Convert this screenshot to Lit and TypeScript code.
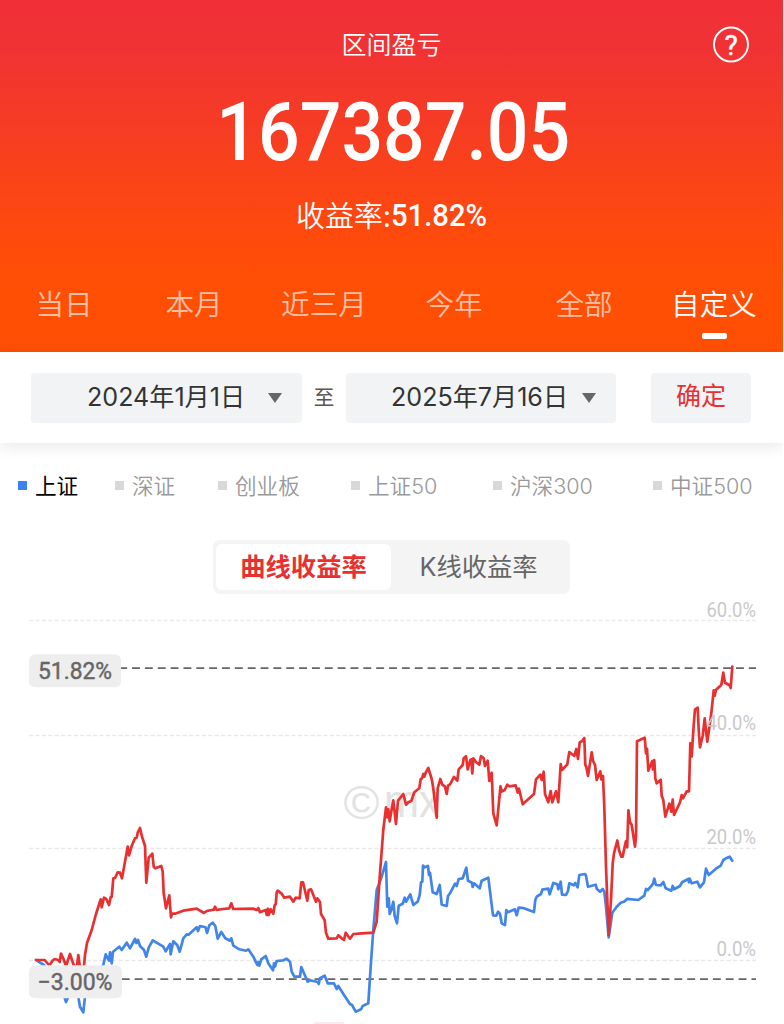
import { LitElement, html, svg, css } from "lit";
import { customElement, property } from "lit/decorators.js";

const PORTFOLIO =
  "36,960 44.7,960 49.3,965.5 52.7,960.5 54.7,959 58.3,960 59.7,962 61,953.5 63.5,959 66,966 70,954 74,966 77,966 78.3,955 80,968 84,966 85,955 87,943 91.7,930 96,914 100.7,899.3 101.7,907.3 104,897.7 106.3,899 109,905 110.7,897 111.7,897 113.3,878.3 115,878 117.7,872.3 120,872.7 122,878.3 127.7,846.7 129,855.3 131.7,846 135,838.3 136.7,837.5 137.7,832.7 140,828 142.3,837.7 145,846 146.3,882.7 148.7,857.7 152.3,853.7 153.7,866.7 155.3,868.3 161.3,866 162.7,871.7 163.7,893.3 166,908.3 169.3,895.3 171,917.3 172,913.7 175,913.7 183.3,910.7 196.7,908.7 204,913 206.7,911 214,909.7 215,906.7 216.7,910 222.7,909 229.3,908.3 231.3,903.3 233.3,909 253.3,908.7 256.7,910 258.3,908 260,912.2 265.7,910 266.7,915 268,908.7 268.7,915 270.7,909.3 273.3,913.7 274.7,905 275.7,904.3 276.7,892.3 277.7,890.7 281.7,893.7 284.3,897.7 290,896.7 293.3,901.7 295.7,897.7 299.7,898.3 301.3,882.3 303,882.3 307.3,900.7 308.7,890 311,889.3 316,901.7 317.3,898.3 320,902 321,914 324.7,920.3 326,932.7 328.3,938.7 336.7,938.3 338.3,935.3 341.7,938.3 344,940 345.7,932.7 350,938.7 353.3,934 362.3,933.3 373.3,932.7 376.7,921.7 380,873 383.3,830 386,807.3 387.3,817.3 388.3,809.3 389.7,821.3 391.2,812 393.3,800.3 396,824 398,800.7 403.3,794 406,804.7 408.3,802.3 411.3,801 414.3,792.3 419.3,788.3 420.7,779 422,778.5 423.3,774 424.3,776.7 425.7,772.7 428.3,768 431.7,779 433.3,788.3 436.7,817.7 437.7,788.3 440.3,779 442.3,784.7 445,786.7 446.7,794 448,785.7 450,784.3 454,777 457.3,780.7 458.7,769.3 462.7,765 463.7,758.3 466,756.3 467.7,769.3 470.3,760 471.3,759.5 472.3,773.3 473.3,758.3 476,762 479.3,764.7 481,756 483.7,758.3 485,766 487.7,760.7 489.3,781 491.7,772.7 493.3,813.3 496.7,825.3 500.5,786.4 501.8,791.5 504.7,790 507.3,784.7 509.3,786.3 515.7,785.3 517.7,792.7 519,788.7 522.7,804.3 534,794 536,779.3 540.3,774.7 541.7,780 543.7,771.7 545,794 548.3,802.3 550.7,791 552.3,802.3 556,791.3 558.3,802.3 560.7,764 562,770 567.3,764.3 569.3,752 574.3,756 576.3,749 578,759 579.7,742.3 582,741.3 584.3,738 585.3,765 586.3,766.7 588,776 591.7,752.3 593,760.7 595,765 596.7,780 600.3,771.3 601.3,779.3 603,776 604.3,806.7 606,866.7 608.7,935 611,900 612.7,863.3 614,853.3 617.3,840.5 619,850 621.2,856.7 622.7,856.7 624.3,848.3 626,841 627.2,847.3 628.4,810.3 630,822.3 631.7,825 635,846.7 636,836.7 637,741.3 644.7,737.7 646,753.3 647,748.7 648.3,770.7 652.3,761 652.9,769.3 654.3,760 655.3,778.3 656.7,783.3 660.7,779.7 661.7,795.7 663.3,800 665.3,816.7 669.3,803.7 671.3,811.7 672.7,799.7 674,815 680,802.3 681.7,795 683,798.3 686.7,791.3 689,791.3 690.3,743.3 691.7,756.3 693.7,725 695,709.3 697.7,707.7 698.7,730 700,747.3 702.7,736 704.7,718.3 707.3,741.7 711.3,713.3 713.7,690.3 714.7,695.7 716,689.7 721.3,685 723.3,672.7 725,682.7 729.3,685 730.7,688 732.3,666.7";

const INDEX =
  "36,960 40,962.7 44,965 50,975 58,985 64.3,996.7 66,1002 68.3,996.7 73,980 78.3,996.7 80,1006.7 83.3,1012.3 85,996.7 93,980 103.3,965 105.7,954.3 109,960.7 110,952.3 111.7,963.3 113,951.7 119.3,946.7 121.7,950 126.7,942.7 130,948.3 135,939 136.3,943 138,940 140,946 144,950 146.3,956.7 148.7,947.7 152.7,940.3 163.3,946.7 165.7,951.3 170,944 170.7,954.3 173.3,941.3 177.3,945.3 179.7,951.7 183.3,938.3 186.7,934.3 188.5,934.8 196.7,927.3 198,931 200,926 205.5,927.3 207,933 209.3,925.3 212.7,922.7 215.3,926 217.7,938.7 221.3,932 225.3,938.3 230,940.7 231.3,938.3 233.3,945.7 239.3,949.3 246,950.7 248.3,949.3 253.3,956.7 257.3,965 258.3,962 259.3,965.7 261.3,959.3 265.7,956 268.3,963.3 273,970.3 274,963.3 275,966.5 276.7,961 283.3,960.3 286.7,958.7 290,961.7 291.7,971.7 294.3,976.7 300,976.7 301.3,967 304.3,974 307.7,981.7 310,980.3 317.7,982 318.7,984 320,978.3 324.7,975.7 327.7,983.3 334,983.3 336.7,989 338.3,986 344,995 350,1004 352,1005 355.7,1011.7 361,1009.3 362.7,1006 368.3,1003.3 370.7,966.7 373.3,930 376.7,890 381.7,876.7 386,862 387.3,906.7 388.8,898.3 389.7,914 391.3,910 393.3,901.7 394.7,916 397,923.3 398.7,905.7 402.7,903.7 404.7,897.7 406,901.7 410.3,894.3 413.3,905 417.7,901.7 419.7,895 421,882.3 422.3,881.7 423,865.7 424.7,867.3 428,866 429,875 430,872.7 432.7,892.3 436.7,894 439.7,885 441.7,904.7 446.7,906 448,896 450,893.3 455,883.7 456.7,886 458.7,879 462.7,878.3 466.3,867.7 468,880.7 472,882.7 472.7,887 474,883.3 479.7,888.3 481.7,880.7 488.3,877.7 493,915.3 496.3,915.7 498,911.7 500,914 501.7,923.3 505,925.2 506.3,910 507.7,912.3 515,909.3 516.7,915.3 518.7,907.7 523.3,908 534,912 535.3,900 536.7,896.7 541,894 542.3,889.7 548.3,888.7 549.7,894.3 553.3,883 557.3,884.3 558.3,889.3 560.7,881.7 562,894.7 566,895 568,891 569.3,883.3 573.7,885.3 575.3,883 577.7,887.3 579.3,875 585,874 586,875.7 588,886.7 595.7,884.7 596.7,888.7 600,891.7 602.7,889 604.3,891.7 606,906.7 608.7,937.3 612.3,912.7 616.7,906.7 620.7,902.7 624,901.7 627.3,898.9 638.3,900 644.3,895.7 646,889 647.7,890 652.7,884.3 654.3,878.7 656,885 660.7,885.3 663.3,882 665.7,888.3 671.3,890.7 672.7,886 674,889.3 680,886 682,882.3 688.3,879 689,882.3 689.7,878.7 691.7,883.3 697.3,881.7 700,887.3 704,882.3 706,868.7 708.7,875 716,868.7 720.7,865.7 723.3,860 726,858.3 729.7,856.7 732.3,860.7";

@customElement("date-field")
class DateField extends LitElement {
  @property() value = "";
  static styles = css`
    :host {
      display: flex;
      align-items: center;
      justify-content: flex-end;
      box-sizing: border-box;
      height: 50px;
      background: #f2f3f5;
      border-radius: 4px;
      color: #333;
      font-size: 25.1px;
      white-space: nowrap;
    }
    .arrow {
      border: 7.5px solid transparent;
      border-top: 10px solid #666;
      border-bottom: 0;
    }
    .value {
      line-height: 48px;
      padding-bottom: 2px;
    }
  `;
  render() {
    return html`<span class="value">${this.value}</span><span class="arrow"></span>`;
  }
}

@customElement("return-chart")
class ReturnChart extends LitElement {
  static styles = css`
    :host {
      display: block;
      height: 430px;
      margin-top: -6px;
    }
    svg {
      display: block;
      overflow: visible;
    }
    .grid {
      stroke: #e9e9e9;
      stroke-width: 1.4;
      stroke-dasharray: 4 2.4;
    }
    .marker {
      stroke: #666;
      stroke-width: 1.9;
      stroke-dasharray: 7.9 4.95;
    }
    .series {
      fill: none;
      stroke-width: 2.7;
      stroke-linejoin: round;
      stroke-linecap: round;
    }
    .mine {
      stroke: #e83030;
    }
    .index {
      stroke: #4285e8;
    }
    .tick {
      font: 400 19.3px Roboto, sans-serif;
      fill: #c9c9c9;
    }
    .pill {
      fill: #eee;
    }
    .bound {
      font: 400 23.6px Roboto, sans-serif;
      fill: #666;
      stroke: #666;
      stroke-width: 0.45;
    }
    .mark {
      font: 46px "Liberation Sans", sans-serif;
      fill: #e2e2e2;
    }
    .stub {
      fill: #fde9eb;
    }
  `;
  render() {
    const ticks = [
      { label: "60.0%", y: 620.5, base: 616.8, x: 706.5 },
      { label: "40.0%", y: 735.5, base: 730.3, x: 706.5 },
      { label: "20.0%", y: 848.5, base: 843.8, x: 706.5 },
      { label: "0.0%", y: 960.5, base: 955.5, x: 716.5 },
    ];
    return html`
      <svg width="783" height="430" viewBox="0 594 783 430">
        ${ticks.map((t) => svg`<line class="grid" x1="29" x2="756" y1=${t.y} y2=${t.y}></line>`)}
        <text class="mark" x="343.5" y="819" textLength="36" lengthAdjust="spacingAndGlyphs">©</text>
        <text class="mark" x="384" y="817" textLength="56" lengthAdjust="spacingAndGlyphs">mx</text>
        <line class="marker" x1="119.2" x2="756" y1="668.1" y2="668.1"></line>
        <line class="marker" x1="121.8" x2="756" y1="979.1" y2="979.1"></line>
        <polyline class="series index" points=${INDEX}></polyline>
        <polyline class="series mine" points=${PORTFOLIO}></polyline>
        ${ticks.map(
          (t) => svg`<text class="tick" x=${t.x} y=${t.base} textLength=${756 - t.x} lengthAdjust="spacingAndGlyphs">${t.label}</text>`
        )}
        <rect class="pill" x="29" y="654.3" width="92" height="33" rx="6"></rect>
        <text class="bound" x="38" y="679" textLength="74" lengthAdjust="spacingAndGlyphs">51.82%</text>
        <rect class="pill" x="29" y="965.3" width="93" height="33" rx="6"></rect>
        <text class="bound" x="37.5" y="990" textLength="75" lengthAdjust="spacingAndGlyphs">−3.00%</text>
        <rect class="stub" x="313" y="1022" width="32" height="6" rx="3"></rect>
      </svg>
    `;
  }
}

@customElement("app-root")
class AppRoot extends LitElement {
  static styles = css`
    :host {
      display: block;
      width: 783px;
      height: 1024px;
      overflow: hidden;
      background: #fff;
      font-family: Inter, "Noto Sans CJK SC", sans-serif;
    }
    .hero {
      display: flex;
      flex-direction: column;
      height: 352px;
      color: #fff;
      background: linear-gradient(#f03037 0, #f13234 50px, #ff4c09 250px, #ff4f05 290px);
    }
    .top {
      display: grid;
      grid-template-columns: 72px 1fr 72px;
      align-items: center;
      height: 88px;
      text-align: center;
    }
    .title {
      grid-column: 2;
      font-size: 25px;
      font-weight: 350;
      padding-bottom: 3px;
    }
    .help {
      display: block;
      justify-self: start;
    }
    .help text {
      font: 400 28px Roboto, sans-serif;
      fill: #fff;
      stroke: #fff;
      stroke-width: 0.5;
    }
    .amount {
      height: 88px;
      line-height: 89px;
      text-align: center;
      font-family: Roboto, sans-serif;
      font-weight: 500;
      font-size: 81.5px;
      transform: scaleX(0.9);
      padding-left: 4px;
    }
    .rate {
      display: flex;
      justify-content: center;
      align-items: center;
      height: 78px;
      font-size: 29px;
    }
    .rate-label {
      font-weight: 350;
      font-family: "Noto Sans CJK SC", sans-serif;
      padding-bottom: 3px;
    }
    .rate svg {
      display: block;
      overflow: visible;
    }
    .rate-value {
      font: 500 31px Roboto, sans-serif;
      fill: #fff;
    }
    .tabs {
      display: grid;
      grid-template-columns: repeat(6, 130px);
      height: 98px;
      margin-left: -1px;
    }
    .tab {
      display: flex;
      flex-direction: column;
      align-items: center;
      font-size: 28.6px;
      font-weight: 350;
      line-height: 42px;
      padding-top: 30px;
      color: rgba(255, 255, 255, 0.65);
    }
    .tab.on {
      color: #fff;
    }
    .tab.on::after {
      content: "";
      width: 25px;
      height: 6px;
      margin-top: 7px;
      border-radius: 2px;
      background: #fff;
    }
    .filter {
      display: flex;
      align-items: center;
      box-sizing: border-box;
      height: 91px;
      padding-left: 31px;
      box-shadow: 0 4px 14px rgba(0, 0, 0, 0.09);
    }
    .from {
      width: 271px;
      padding-right: 20px;
      gap: 23px;
    }
    .to {
      width: 270px;
      padding-right: 20px;
      gap: 14px;
    }
    .sep {
      width: 44px;
      text-align: center;
      font-size: 20.5px;
      color: #555;
      padding-bottom: 4px;
    }
    .ok {
      width: 100px;
      height: 50px;
      margin-left: 35px;
      line-height: 47px;
      text-align: center;
      font-size: 25px;
      color: #e93030;
      background: #f2f3f5;
      border-radius: 4px;
    }
    .legend {
      display: grid;
      grid-template-columns: 97px 103px 133px 142px 160px auto;
      padding-left: 18px;
      height: 86px;
      align-items: center;
      font-size: 21.6px;
      font-weight: 350;
      color: #999;
      white-space: nowrap;
    }
    .entry {
      display: flex;
      align-items: center;
      gap: 8px;
    }
    .name {
      padding-bottom: 3px;
    }
    .swatch {
      width: 9px;
      height: 9px;
      margin-bottom: 2px;
      background: #d8d8d8;
    }
    .entry.on {
      color: #000;
      font-weight: 400;
    }
    .entry.on .swatch {
      background: #3d7ff5;
    }
    .modes {
      display: flex;
      box-sizing: border-box;
      width: 357px;
      height: 54px;
      margin: 11px 0 6px 213px;
      padding: 4px 3px;
      border-radius: 7px;
      background: #f4f4f4;
      font-size: 25.3px;
      line-height: 45px;
      text-align: center;
      color: #666;
    }
    .mode {
      width: 175px;
      border-radius: 6px;
    }
    .mode.on {
      background: #fff;
      color: #e83030;
      font-weight: 700;
    }
  `;

  render() {
    const tabs = ["当日", "本月", "近三月", "今年", "全部", "自定义"];
    const legend = ["上证", "深证", "创业板", "上证50", "沪深300", "中证500"];
    return html`
      <section class="hero">
        <div class="top">
          <span class="title">区间盈亏</span>
          <svg class="help" width="40" height="40" viewBox="0 0 40 40">
            <circle cx="20" cy="20.5" r="17" fill="none" stroke="#fff" stroke-width="1.9"></circle>
            <text x="20" y="30.5" text-anchor="middle">?</text>
          </svg>
        </div>
        <div class="amount">167387.05</div>
        <div class="rate">
          <span class="rate-label">收益率:</span>
          <svg width="96" height="44" viewBox="0 0 96 44">
            <text class="rate-value" x="0" y="33" textLength="96" lengthAdjust="spacingAndGlyphs">51.82%</text>
          </svg>
        </div>
        <nav class="tabs">
          ${tabs.map((t, i) => html`<span class="tab ${i === 5 ? "on" : ""}">${t}</span>`)}
        </nav>
      </section>
      <section class="filter">
        <date-field class="from" value="2024年1月1日"></date-field>
        <span class="sep">至</span>
        <date-field class="to" value="2025年7月16日"></date-field>
        <span class="ok">确定</span>
      </section>
      <div class="legend">
        ${legend.map(
          (l, i) =>
            html`<span class="entry ${i === 0 ? "on" : ""}"><i class="swatch"></i><span class="name">${l}</span></span>`
        )}
      </div>
      <div class="modes">
        <span class="mode on">曲线收益率</span>
        <span class="mode">K线收益率</span>
      </div>
      <return-chart></return-chart>
    `;
  }
}
